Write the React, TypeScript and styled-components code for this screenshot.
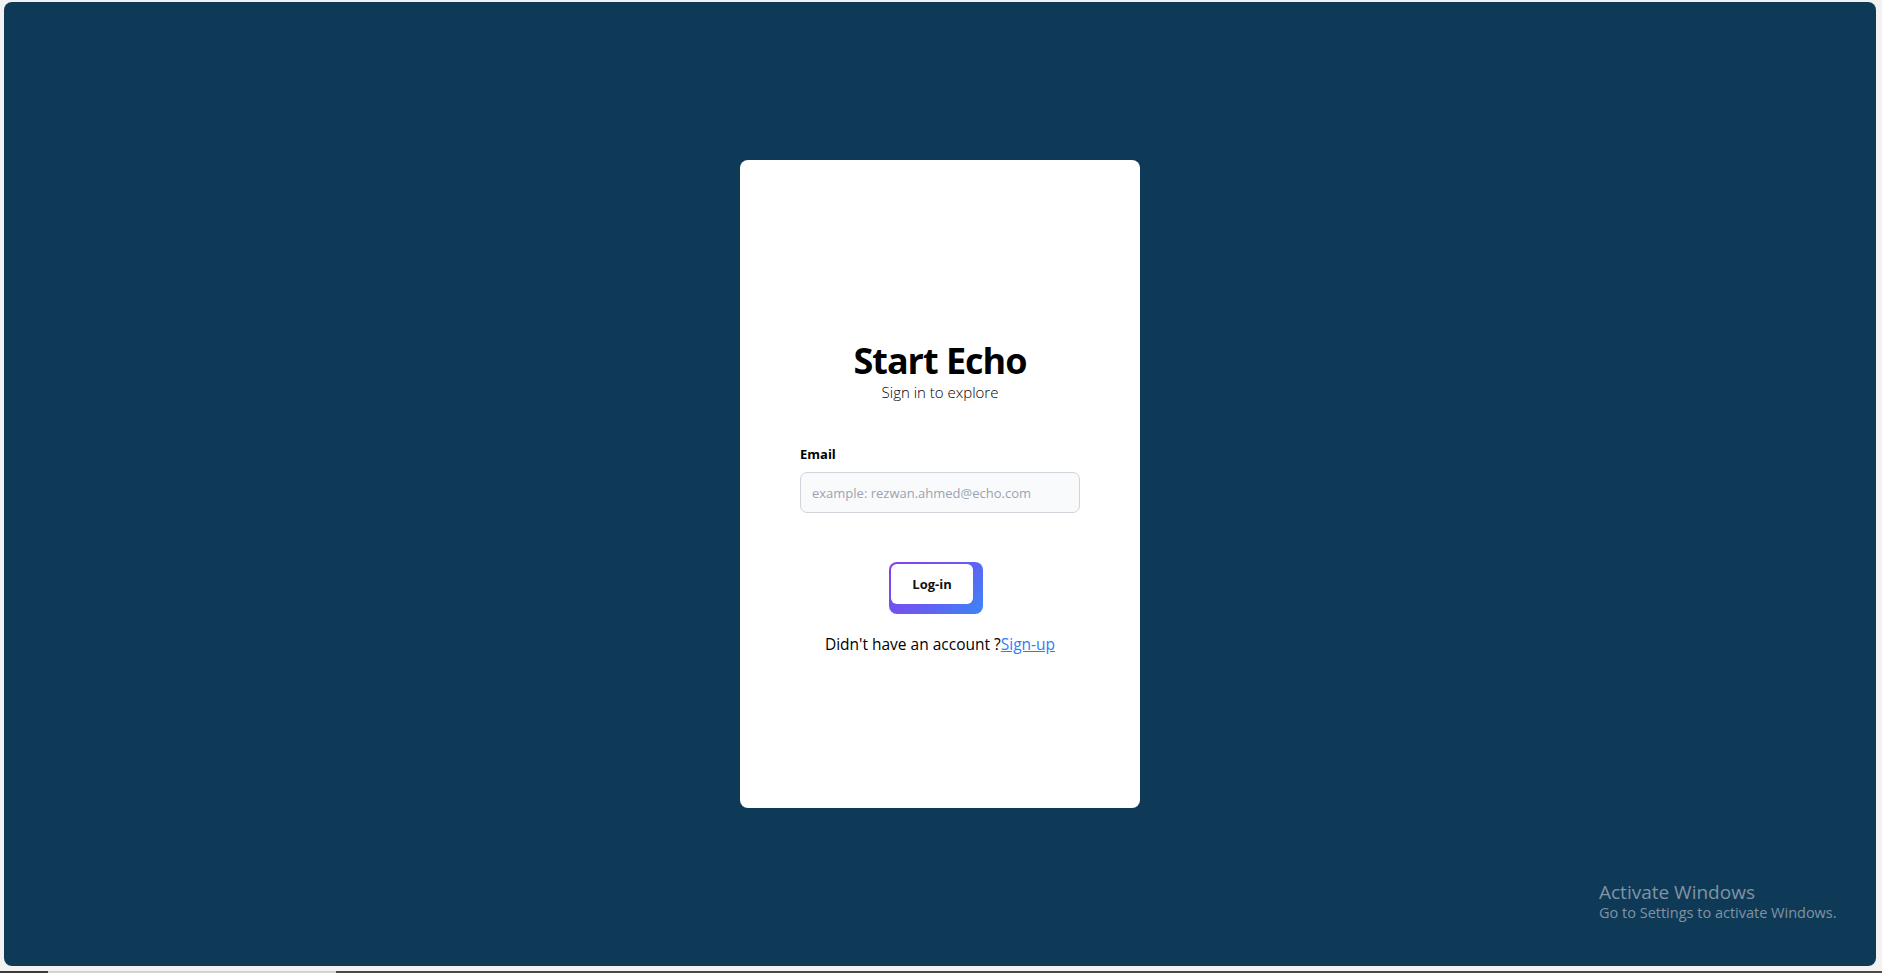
import React from "react";
import styled, { createGlobalStyle } from "styled-components";

const GlobalStyle = createGlobalStyle`
  html, body {
    margin: 0;
    padding: 0;
    background: #f2f2f2;
    font-family: "Open Sans", "Noto Sans", Arial, sans-serif;
  }
  * { box-sizing: border-box; }
`;

const Page = styled.div`
  width: 1882px;
  height: 973px;
  display: flex;
  flex-direction: column;
  overflow: hidden;
  position: relative;
`;

const Panel = styled.main`
  margin: 2px 6px 0 4px;
  height: 964px;
  background: #0e3a58;
  border-radius: 8px;
  display: flex;
  align-items: center;
  justify-content: center;
  position: relative;
`;

const Gap = styled.div`
  height: 5px;
`;

const BottomStrip = styled.div`
  height: 2px;
  display: flex;
`;

const StripPart = styled.div<{ $w?: number; $c: string }>`
  background: ${(p) => p.$c};
  ${(p) => (p.$w ? `width: ${p.$w}px;` : "flex: 1;")}
`;

const Card = styled.section`
  width: 400px;
  height: 648px;
  background: #ffffff;
  border-radius: 8px;
  display: flex;
  flex-direction: column;
  align-items: center;
  padding-top: 179px;
`;

const Title = styled.h1`
  margin: 0;
  font-size: 36px;
  line-height: 44px;
  font-weight: 700;
  color: #000;
  letter-spacing: -1px;
`;

const Subtitle = styled.p`
  margin: 0;
  font-size: 15px;
  line-height: 18px;
  font-weight: 300;
  color: #000;
`;

const Field = styled.div`
  width: 280px;
  margin-top: 45px;
  display: flex;
  flex-direction: column;
  gap: 10px;
`;

const Label = styled.label`
  font-size: 13px;
  line-height: 16px;
  font-weight: 700;
  color: #000;
`;

const Input = styled.input`
  width: 280px;
  height: 41px;
  border: 1px solid #d1d5db;
  border-radius: 7px;
  background: #f9fafb;
  padding: 0 11px;
  font-family: "Open Sans", "Noto Sans", Arial, sans-serif;
  font-size: 13px;
  color: #111;
  outline: none;
  &::placeholder {
    color: #9ca3af;
  }
`;

const LoginButton = styled.button`
  margin-top: 49px;
  margin-right: 8px;
  padding: 2px 10px 10px 2px;
  border: none;
  border-radius: 8px;
  background: linear-gradient(135deg, #8b3cf0 0%, #6a5af2 50%, #3b86f6 100%);
  cursor: pointer;
  display: flex;
`;

const ButtonFace = styled.span`
  width: 82px;
  height: 40px;
  border-radius: 6px;
  background: #ffffff;
  display: flex;
  align-items: center;
  justify-content: center;
  font-family: "Open Sans", "Noto Sans", Arial, sans-serif;
  font-size: 13px;
  font-weight: 700;
  color: #111;
`;

const Footer = styled.p`
  margin: 20px 0 0;
  font-size: 15.5px;
  line-height: 20px;
  color: #000;
`;

const SignUp = styled.a`
  color: #2f7df6;
  text-decoration: underline;
`;

const Watermark = styled.div`
  position: absolute;
  left: 1599px;
  top: 880px;
  color: #8193a3;
  display: flex;
  flex-direction: column;
`;

const WatermarkTitle = styled.span`
  font-size: 19px;
  line-height: 24px;
`;

const WatermarkSub = styled.span`
  font-size: 14.5px;
  line-height: 18px;
`;

export default function App() {
  return (
    <>
      <GlobalStyle />
      <Page>
        <Panel>
          <Card>
            <Title>Start Echo</Title>
            <Subtitle>Sign in to explore</Subtitle>
            <Field>
              <Label htmlFor="email">Email</Label>
              <Input id="email" type="email" placeholder="example: rezwan.ahmed@echo.com" />
            </Field>
            <LoginButton type="button">
              <ButtonFace>Log-in</ButtonFace>
            </LoginButton>
            <Footer>
              Didn't have an account ?<SignUp href="#">Sign-up</SignUp>
            </Footer>
          </Card>
        </Panel>
        <Gap />
        <BottomStrip>
          <StripPart $w={48} $c="#3a3a3a" />
          <StripPart $w={288} $c="#d4d4d4" />
          <StripPart $c="#4a4a4a" />
        </BottomStrip>
        <Watermark>
          <WatermarkTitle>Activate Windows</WatermarkTitle>
          <WatermarkSub>Go to Settings to activate Windows.</WatermarkSub>
        </Watermark>
      </Page>
    </>
  );
}
